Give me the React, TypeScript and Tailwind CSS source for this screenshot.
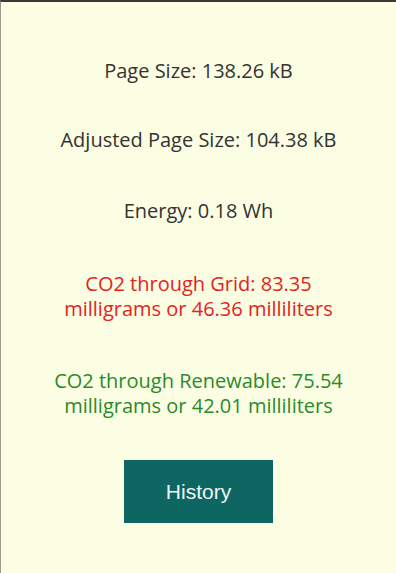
export default function App() {
  return (
    <div className="min-h-[573px] w-[396px] bg-[#fbfee3] border-t-2 border-t-[#3a3a3a] border-l border-l-[#9a9a8c] flex flex-col items-center text-center font-['Open_Sans',sans-serif] text-[20px] leading-[25px] text-[#333333]">
      <p className="mt-[56px]">Page Size: 138.26 kB</p>
      <p className="mt-[44px]">Adjusted Page Size: 104.38 kB</p>
      <p className="mt-[46px]">Energy: 0.18 Wh</p>
      <p className="mt-[48px] text-[#e52222]">
        CO2 through Grid: 83.35
        <br />
        milligrams or 46.36 milliliters
      </p>
      <p className="mt-[47px] text-[#2a8a2a]">
        CO2 through Renewable: 75.54
        <br />
        milligrams or 42.01 milliliters
      </p>
      <button className="mt-[42px] w-[149px] h-[63px] bg-[#0e6662] text-[#eef4f2] font-['Liberation_Sans',sans-serif] text-[21px]">
        History
      </button>
    </div>
  )
}
